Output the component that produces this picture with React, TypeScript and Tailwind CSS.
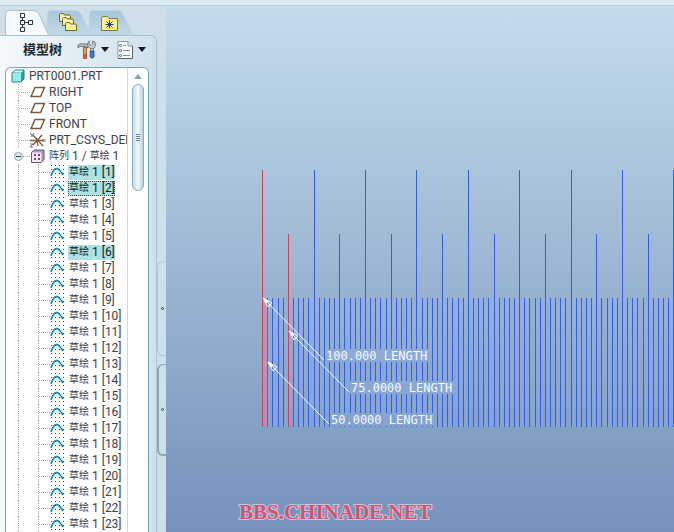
import type { ReactNode } from "react";

const SKETCH_COUNT = 23;
const SELECTED = [1, 2, 6];
const FOCUSED = 2;

const STEP = 5.14;
const LINE_COUNT = 140;

const labels = [
  { text: "100.000 LENGTH", x: 159, y: 354, from: [158, 354], to: [97, 292] },
  { text: "75.0000 LENGTH", x: 184, y: 386, from: [183, 386], to: [123, 325] },
  { text: "50.0000 LENGTH", x: 164, y: 418, from: [163, 418], to: [102, 356] },
];

function Tab({ label, active, className, children }: { label: string; active?: boolean; className?: string; children: ReactNode }) {
  return (
    <button type="button" role="tab" aria-label={label} aria-selected={!!active} className={`relative h-[25px] w-[48px] ${className ?? ""}`}>
      <svg viewBox="0 0 48 25" className="h-[25px] w-[48px]" aria-hidden="true">
        <defs>
          <linearGradient id="tab-idle" x1="0" y1="0" x2="0" y2="1">
            <stop offset="0" stopColor="#a8c6da" />
            <stop offset="1" stopColor="#c3d9e7" />
          </linearGradient>
        </defs>
        <path
          d="M0.5 26V4Q0.5 0.5 4 0.5H28Q32 0.5 34 4L44 26Z"
          fill={active ? "#f6fafd" : "url(#tab-idle)"}
          stroke={active ? "#a5bfce" : "#bcd3e1"}
        />
        {children}
      </svg>
    </button>
  );
}

function Folder({ x, y }: { x: number; y: number }) {
  return (
    <g transform={`translate(${x} ${y})`}>
      <path d="M0.5 8.5V1.5L1.5 0.5H4.5L5.5 2H10.5L11.5 3V8.5Z" fill="#f8ee8b" stroke="#6d6538" />
      <path d="M2 3.5H10" stroke="#fffbd0" />
    </g>
  );
}

function Caret() {
  return (
    <svg viewBox="0 0 8 5" className="h-[5px] w-2" aria-hidden="true">
      <path d="M0 0H8L4 5Z" fill="#111820" />
    </svg>
  );
}

function ToolsIcon() {
  return (
    <svg viewBox="0 0 20 20" className="size-5" aria-hidden="true">
      <path d="M1 5Q3 3 7 4H11V7.5H9L8 6.5H5Q3 5.5 1 8Z" fill="#b7bfc1" stroke="#5c666a" strokeWidth=".8" />
      <path d="M6.5 7.5H9.5V18.5H6.5Z" fill="#f0a14c" stroke="#8d4318" strokeWidth=".8" />
      <path d="M7 14H9V18H7Z" fill="#d75d2c" />
      <path d="M12.5 1L12 4L14 5.5L15.5 4V1Q19 1.500 18.500 5Q18 8 16 8.500H13.500Q10.500 7 10.500 4Q10.500 2 12.500 1Z" fill="#c6cdd0" stroke="#626c70" strokeWidth=".8" />
      <path d="M13.5 8.500H16.5V12H13.5Z" fill="#d8dddd" stroke="#667077" strokeWidth=".8" />
      <path d="M13.2 11H17V17Q15 19.500 13.2 17Z" fill="#3b78d8" stroke="#1b4685" strokeWidth=".8" />
    </svg>
  );
}

function SettingsIcon() {
  return (
    <svg viewBox="0 0 17 20" className="h-5 w-[17px]" aria-hidden="true">
      <path d="M1 1.5H11L15.5 6V18.5H1Z" fill="#f8fbfd" stroke="#8d9ba9" />
      <path d="M11 1.5V6H15.5" fill="#dce5ed" stroke="#8d9ba9" />
      <path d="M1 18.5H15.5V6" fill="none" stroke="#50606d" />
      <path d="M6 5.5H9M6 10.5H13M6 15.5H13" stroke="#8291a0" />
      <g fill="#fff" stroke="#46566a">
        <circle cx="3.5" cy="5.5" r="1" />
        <circle cx="3.5" cy="10.5" r="1" />
        <circle cx="3.5" cy="15.5" r="1" />
      </g>
    </svg>
  );
}

function PartIcon() {
  return (
    <svg viewBox="0 0 14 14" className="size-3.5 shrink-0" aria-hidden="true">
      <path d="M1 4L4 1H13V10L10 13H1Z" fill="#369b9c" stroke="#2d7880" />
      <path d="M1.5 4H10V12.5H1.5Z" fill="#8ff0ec" />
      <path d="M2 3.5L4 1.5H12.5L10.5 3.5Z" fill="#c6fbf7" />
    </svg>
  );
}

function PlaneIcon() {
  return (
    <svg viewBox="0 0 16 16" className="size-4 shrink-0" aria-hidden="true">
      <path d="M5 3.5H14.5L10.5 12.5H1Z" fill="#fff" stroke="#80583a" strokeWidth="1.5" />
    </svg>
  );
}

function CsysIcon() {
  return (
    <svg viewBox="0 0 16 16" className="size-4 shrink-0" aria-hidden="true">
      <path d="M0 8.5H13M3 3L13 14M12 3L3 13M7 8L8 14" stroke="#80583a" strokeWidth="1.3" />
      <path d="M0 1L2 3L4 1M2 3V5M12.5 7L15.5 10M15.5 7L12.5 10M0 12H3L0 15H3" fill="none" stroke="#5b5551" strokeWidth=".9" />
    </svg>
  );
}

function PatternIcon() {
  return (
    <svg viewBox="0 0 16 16" className="size-4 shrink-0" aria-hidden="true">
      <path d="M1.5 4.5L4 2H14V11.5L11.5 14.5H1.5Z" fill="#a89abb" stroke="#625675" />
      <path d="M2 4.5H11.5V14H2Z" fill="#f5e6fb" />
      <path d="M4 7H6M8 7H10M4 11H6M8 11H10" stroke="#833f91" strokeWidth="2" />
    </svg>
  );
}

function SketchIcon() {
  return (
    <svg viewBox="0 0 14 16" className="h-4 w-3.5 shrink-0" aria-hidden="true">
      <path d="M1 12Q3 4.5 7 4.5Q9 4.5 13 11" fill="none" stroke="#c9f3ff" strokeWidth="3.500" />
      <path d="M1 1.5H14M1 5.5H14M1 9.5H14M1 13.5H14" stroke="#3f4854" strokeDasharray="1 3" />
      <path d="M1 12Q3 4.5 7 4.5Q9 4.5 13 11" fill="none" stroke="#267eb5" strokeWidth="1.500" />
    </svg>
  );
}

function Connector({ className }: { className: string }) {
  return (
    <span className={`h-4 shrink-0 border-l border-dotted border-[#a3a9ae] ${className}`}>
      <span className="block h-[9px] border-b border-dotted border-[#a3a9ae]" />
    </span>
  );
}

function Cjk({ children }: { children: string }) {
  return <span className="text-[10px]">{children}</span>;
}

function TopRow({ icon, children }: { icon: ReactNode; children: ReactNode }) {
  return (
    <li role="treeitem" className="flex h-4 items-center pl-3">
      <Connector className="w-3" />
      {icon}
      <span className="ml-[3px]">{children}</span>
    </li>
  );
}

function SketchRow({ index }: { index: number }) {
  const selected = SELECTED.includes(index);
  return (
    <li role="treeitem" aria-selected={selected} className="flex h-4 items-center pl-3">
      <span className="h-4 w-5 shrink-0 border-l border-dotted border-[#a3a9ae]" />
      <Connector className="w-3" />
      <SketchIcon />
      <span
        className={`ml-1 flex h-[15px] items-center pl-px whitespace-pre ${selected ? "bg-[#aee1e2] text-[#101c24]" : ""} ${index === FOCUSED ? "outline-1 -outline-offset-1 outline-dotted outline-[#344b50]" : ""}`}
      >
        <Cjk>草绘</Cjk>
        {` 1 [${index}]`}
      </span>
    </li>
  );
}

function ModelTree() {
  return (
    <div className="mr-[7px] ml-[5px] flex min-h-0 flex-1 overflow-hidden rounded-t-md border border-b-0 border-[#78a5bb] bg-white">
      <ul role="tree" aria-label="模型树" className="min-w-0 flex-1 overflow-hidden text-[12px] leading-4 whitespace-nowrap text-[#3c4147]">
        <li role="treeitem" className="flex h-4 items-center pl-[5px]">
          <PartIcon />
          <span className="ml-1">PRT0001.PRT</span>
        </li>
        <TopRow icon={<PlaneIcon />}>RIGHT</TopRow>
        <TopRow icon={<PlaneIcon />}>TOP</TopRow>
        <TopRow icon={<PlaneIcon />}>FRONT</TopRow>
        <TopRow icon={<CsysIcon />}>PRT_CSYS_DEF</TopRow>
        <li role="treeitem" aria-expanded="true" className="flex h-4 items-center pl-2">
          <button type="button" aria-label="折叠" className="flex size-[9px] items-center justify-center rounded-full border border-[#8da9b6] bg-[#dcebf1]">
            <span className="h-px w-[5px] bg-[#33434d]" />
          </button>
          <span className="w-[7px] border-b border-dotted border-[#a3a9ae]" />
          <PatternIcon />
          <span className="ml-[3px] flex items-center whitespace-pre">
            <Cjk>阵列</Cjk>
            {" 1 / "}
            <Cjk>草绘</Cjk>
            {" 1"}
          </span>
        </li>
        {Array.from({ length: SKETCH_COUNT }, (_, i) => (
          <SketchRow key={i} index={i + 1} />
        ))}
      </ul>
      <div className="flex w-[21px] shrink-0 flex-col items-center border-l border-[#c9dce5] bg-[#fdfefe] pr-px">
        <button type="button" aria-label="向上滚动" className="flex h-4 w-full items-center justify-center">
          <svg viewBox="0 0 8 5" className="h-[5px] w-2" aria-hidden="true">
            <path d="M0 5L4 0L8 5Z" fill="#86a5a8" />
          </svg>
        </button>
        <div className="flex h-[107px] w-3 flex-col items-center justify-center gap-px rounded-full border border-[#8fabc2] bg-linear-to-r from-[#c4dae8] via-[#f5fbff] to-[#b4cfe1]">
          <span className="h-px w-1 bg-[#6b8598]" />
          <span className="h-px w-1 bg-[#6b8598]" />
          <span className="h-px w-1 bg-[#6b8598]" />
          <span className="h-px w-1 bg-[#6b8598]" />
        </div>
      </div>
    </div>
  );
}

function Navigator() {
  return (
    <aside className="flex w-[166px] shrink-0 flex-col bg-[#cfe0eb]">
      <div role="tablist" className="flex h-[29px] shrink-0 items-end pl-[5px]">
        <Tab label="模型树" active className="z-10">
          <g fill="#fff" stroke="#26323c">
            <path d="M17.5 5V19M17.5 12.5H25" />
            <path d="M15.5 3.5H19.5V7.5H15.5ZM15.5 10.5H19.5V14.5H15.5ZM15.5 17.5H19.5V21.5H15.5ZM23.5 10.5H27.5V14.5H23.5Z" />
          </g>
        </Tab>
        <Tab label="文件夹浏览器" className="z-[5] -ml-1.5">
          <Folder x={12} y={3} />
          <Folder x={15} y={7} />
          <Folder x={18} y={12} />
        </Tab>
        <Tab label="收藏夹" className="-ml-1.5">
          <path d="M12.5 20.5V7.5L14 6.5H18.5L20 8.5H28.5V20.5Z" fill="#fbf08a" stroke="#857c45" />
          <path d="M20.5 10.5V18.5M16.5 14.5H24.5M17.5 11.5L23.5 17.5M23.5 11.5L17.5 17.5" stroke="#263b86" />
        </Tab>
      </div>
      <div className="flex min-h-0 flex-1">
        <div className="flex w-[157px] shrink-0 flex-col rounded-tr-md border-t border-r border-[#a9c2d1] bg-linear-to-r from-[#f4f9fc] to-[#cfe1ec]">
          <div className="flex h-[31px] shrink-0 items-center pb-1 pl-[23px]">
            <h1 className="text-[13px] leading-5 font-bold text-[#202832]">模型树</h1>
            <button type="button" aria-label="工具" className="ml-[15px] flex items-center gap-1">
              <ToolsIcon />
              <Caret />
            </button>
            <button type="button" aria-label="设置" className="ml-2 flex items-center gap-1">
              <SettingsIcon />
              <Caret />
            </button>
          </div>
          <ModelTree />
        </div>
        <div className="flex flex-1 flex-col gap-2 pt-[226px]">
          <button type="button" aria-label="隐藏导航器" className="flex h-[95px] items-center justify-center rounded-l-md border border-r-0 border-[#b4cad7] bg-[#cfe0ea]">
            <span className="size-[3px] rounded-full border border-[#263c50]" />
          </button>
          <button type="button" aria-label="隐藏浏览器" className="flex h-[92px] items-center justify-center rounded-l-md border border-r-0 border-b-2 border-l-2 border-[#8da4b4] bg-[#cfe0ea]">
            <span className="size-[3px] rounded-full border border-[#263c50]" />
          </button>
        </div>
      </div>
    </aside>
  );
}

function Drawing() {
  return (
    <svg width="900" height="526" viewBox="0 0 900 526" className="block max-w-none" role="img" aria-label="LENGTH">
      <defs>
        <mask id="label-gaps" maskUnits="userSpaceOnUse" x="0" y="0" width="900" height="526">
          <rect width="900" height="526" fill="#fff" />
          {labels.map((l) => (
            <rect key={l.text} x={l.x} y={l.y - 11} width="105" height="13" fill="#000" />
          ))}
        </mask>
      </defs>
      <g shapeRendering="crispEdges">
        <rect x="97" y="293" width="803" height="127" fill="#8caaf6" opacity=".25" />
        <rect x="97" y="293" width="4" height="127" fill="#d78399" opacity=".45" />
      </g>
      <g mask="url(#label-gaps)" shapeRendering="crispEdges">
        {Array.from({ length: LINE_COUNT }, (_, i) => {
          const x = Math.floor(96.7 + i * STEP);
          const top = i % 10 === 0 ? 164 : i % 5 === 0 ? 228 : 292;
          const red = i === 0 || i === 1 || i === 5;
          return <rect key={i} x={x} y={top} width="1" height={421 - top} fill={red ? "#d93a4e" : "#3560dc"} />;
        })}
      </g>
      {labels.map((l) => (
        <g key={l.text} fill="#f3fbff" stroke="#f3fbff">
          <line x1={l.from[0]} y1={l.from[1]} x2={l.to[0]} y2={l.to[1]} />
          <path d={`M${l.to[0]} ${l.to[1]}l9 5l-4 4z`} fill="none" />
          <path d={`M${l.to[0]} ${l.to[1]}l5 3l-2 2z`} />
          <text x={l.x + 1} y={l.y} stroke="none" className="font-['DejaVu_Sans_Mono',monospace] text-[12px]">
            {l.text}
          </text>
        </g>
      ))}
    </svg>
  );
}

export default function App() {
  return (
    <div className="flex h-screen flex-col overflow-hidden bg-[#cfe0eb] font-[Roboto,'Noto_Sans_CJK_SC',sans-serif]">
      <header className="h-1.5 shrink-0 border-b border-[#b6d0dc] bg-[#dcebf2]" />
      <div className="flex min-h-0 flex-1">
        <Navigator />
        <main className="relative min-w-0 flex-1 overflow-hidden bg-linear-to-b from-[#c5dceb] to-[#7492bc]">
          <Drawing />
          <p className="absolute bottom-2 left-[73px] font-['Liberation_Serif',serif] text-[21px] leading-6 font-bold text-[#d4526b] [paint-order:stroke] [-webkit-text-stroke:2px_#c9c5dc]">
            BBS.CHINADE.NET
          </p>
        </main>
      </div>
    </div>
  );
}
